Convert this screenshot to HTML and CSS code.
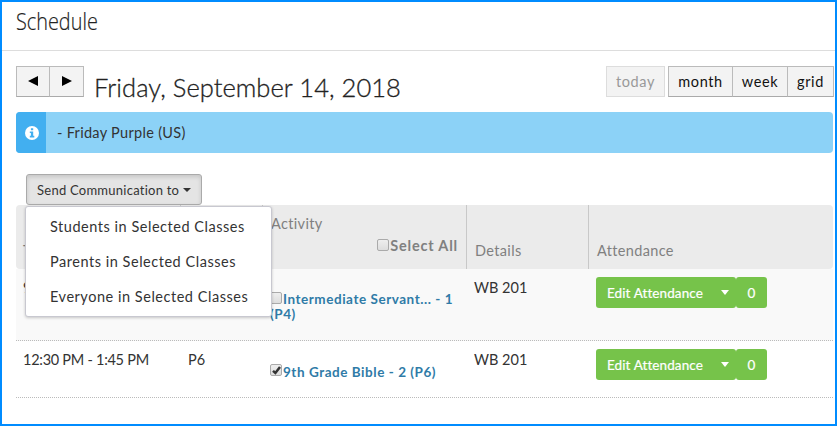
FILE: index.html
```html
<!DOCTYPE html>
<html lang="en">
<head>
<meta charset="utf-8">
<title>Schedule</title>
<link rel="stylesheet" href="styles.css">
</head>
<body>
<div class="page">
  <header class="page-header"><h1>Schedule</h1></header>
  <main>
    <div class="toolbar">
      <div class="group">
        <button class="btn arrow" aria-label="Previous"><svg width="12" height="12" viewBox="0 0 12 12"><path d="M1 6 11 1v10z"/></svg></button>
        <button class="btn arrow" aria-label="Next"><svg width="12" height="12" viewBox="0 0 12 12"><path d="M11 6 1 1v10z"/></svg></button>
      </div>
      <h2>Friday, September 14, 2018</h2>
      <button class="btn today" disabled><span>today</span></button>
      <div class="group views">
        <button class="btn month">month</button>
        <button class="btn week">week</button>
        <button class="btn grid">grid</button>
      </div>
    </div>
    <div class="banner">
      <div class="banner-icon"><svg width="14" height="14" viewBox="0 0 14 14"><circle cx="7" cy="7" r="7" fill="#fff"/><path d="M5.9 2.2h2.3v2H5.9zM4.8 5.4h3.4v4.4h1.1v1.6H4.8V9.8h1.1V7H4.8z" fill="#42aff0"/></svg></div>
      <span>- Friday Purple (US)</span>
    </div>
    <div class="actions">
      <button class="send"><span>Send Communication to</span><i class="caret"></i></button>
      <div class="menu">
        <a>Students in Selected Classes</a>
        <a>Parents in Selected Classes</a>
        <a>Everyone in Selected Classes</a>
      </div>
    </div>
    <div class="table">
      <div class="row head">
        <div class="cell">Time</div>
        <div class="cell"></div>
        <div class="cell activity-head"><span class="activity">Activity</span><label class="all"><i class="check"></i>Select All</label></div>
        <div class="cell details">Details</div>
        <div class="cell attendance">Attendance</div>
      </div>
      <div class="row first">
        <div class="cell">9</div>
        <div class="cell"></div>
        <div class="cell course"><i class="check"></i><a>Intermediate Servant... - 1<br>(P4)</a></div>
        <div class="cell room">WB 201</div>
        <div class="cell edit"><button class="green main"><span>Edit Attendance</span><i class="caret"></i></button><button class="green count">0</button></div>
      </div>
      <div class="row second">
        <div class="cell time">12:30 PM - 1:45 PM</div>
        <div class="cell">P6</div>
        <div class="cell course"><i class="check"><svg width="12" height="12" viewBox="0 0 12 12"><path d="M2 5.8 4.4 8 9 2" fill="none" stroke="#333" stroke-width="2.5"/></svg></i><a>9th Grade Bible - 2 (P6)</a></div>
        <div class="cell room">WB 201</div>
        <div class="cell edit"><button class="green main"><span>Edit Attendance</span><i class="caret"></i></button><button class="green count">0</button></div>
      </div>
    </div>
  </main>
</div>
</body>
</html>
```
FILE: styles.css
```css
* { box-sizing: border-box; }
body { margin: 0; font: 14.5px/20px Lato, "Open Sans", sans-serif; color: #333; background: #fff; }
button { font: inherit; margin: 0; }
h1, h2 { margin: 0; font-weight: 300; white-space: nowrap; color: #222; }
.page { width: 837px; height: 426px; border: 2px solid #008cff; overflow: hidden; }
.page-header { height: 49px; border-bottom: 1px solid #ddd; padding: 2px 0 0 14px; }
h1 { width: max-content; font: 300 24.5px/34px "Open Sans", sans-serif; transform: scaleX(.81); transform-origin: left; -webkit-text-stroke: .2px #222; }
main { padding: 15px 2px 0 14px; }
.toolbar { display: flex; height: 46px; align-items: flex-start; margin-right: -1px; }
.group { display: flex; }
.btn { height: 31px; padding: 0; border: 1px solid #bbb; border-bottom-color: #aaa; background: #f3f3f3; color: #111; font-size: 14.5px; line-height: 28px; letter-spacing: .6px; white-space: nowrap; }
.btn + .btn { border-left: 0; }
.arrow { width: 34px; display: grid; place-items: center; }
.arrow svg { margin-top: -2px; }
h2 { margin: 5px auto 0 10px; font-size: 25.5px; line-height: 32px; letter-spacing: .05px; -webkit-text-stroke: .3px #222; }
.today { width: 59px; margin-right: 3px; color: #999; border-color: #ddd; }
.month { width: 65px; }
.week { width: 55px; }
.grid { width: 46px; }
.banner { width: 817px; height: 41px; border-radius: 4px; overflow: hidden; background: #8cd2f7; display: flex; align-items: center; gap: 11px; letter-spacing: .3px; }
.banner-icon { width: 30px; height: 41px; padding-left: 2px; background: #42aff0; display: grid; place-items: center; }
.actions { position: relative; height: 52px; padding: 21px 0 0 10px; z-index: 2; }
.send { width: 176px; height: 31px; padding: 0 0 0 10px; border: 1px solid #aaa; border-radius: 3px; background: #e4e4e4; box-shadow: inset 0 2px 4px #0002; color: #333; display: flex; align-items: center; gap: 4px; font-size: 13px; letter-spacing: .25px; white-space: nowrap; }
.caret { border: 4px solid transparent; border-top-color: currentColor; border-bottom: 0; }
.menu { position: absolute; left: 9px; top: 53px; width: 247px; height: 111px; padding: 3px 24px; border: 1px solid #c8c8d0; border-radius: 3px; background: #fff; box-shadow: 0 1px 3px #0003; }
.menu a { display: block; height: 35px; line-height: 34px; white-space: nowrap; letter-spacing: .53px; }
.table { width: 817px; }
.row { display: grid; grid-template-columns: 165px 82px 204px 122px 244px; }
.cell { padding: 9px 7px 0; white-space: nowrap; min-width: 0; }
.head { height: 64px; background: #ebebeb; border-radius: 4px; color: #808080; letter-spacing: .35px; }
.head .cell { border-right: 1px solid #c8c8c8; padding-top: 36px; }
.head .cell:last-child { border: 0; padding-left: 8px; }
.head .cell.details { padding-left: 8px; }
.head .activity-head { display: flex; flex-direction: column; padding: 9px 7px 0 8px; }
.all { align-self: flex-end; display: flex; align-items: center; gap: 1px; font-weight: 700; margin: 2px 1px 0 0; letter-spacing: .8px; }
.all .check { margin-top: -3px; }
.check { flex: none; width: 12px; height: 12px; display: inline-grid; place-items: center; border: 1px solid #aaa; border-radius: 2px; background: linear-gradient(#eee, #ddd); }
.first { height: 72px; background: #f9f9f9; }
.row.first, .row.second { border-bottom: 1px dotted #bbb; }
.second { height: 57px; }
.time { letter-spacing: -.27px; }
.course { line-height: 15px; font-size: 13.5px; font-weight: 700; color: #2f7ba7; padding-top: 23px; letter-spacing: .54px; }
.course .check { vertical-align: 0; margin-right: 1px; }
.edit { display: flex; padding-top: 8px; }
.green { height: 31px; border: 0; padding: 0 11px; border-radius: 3px; background: #76c34a; color: #fff; font-size: 13.5px; letter-spacing: .1px; white-space: nowrap; -webkit-text-stroke: .2px #fff; }
.main { width: 140px; display: flex; align-items: center; justify-content: space-between; padding-right: 7px; }
.green .caret { border-width: 5px 4.5px 0; }
.count { width: 31px; }
```
